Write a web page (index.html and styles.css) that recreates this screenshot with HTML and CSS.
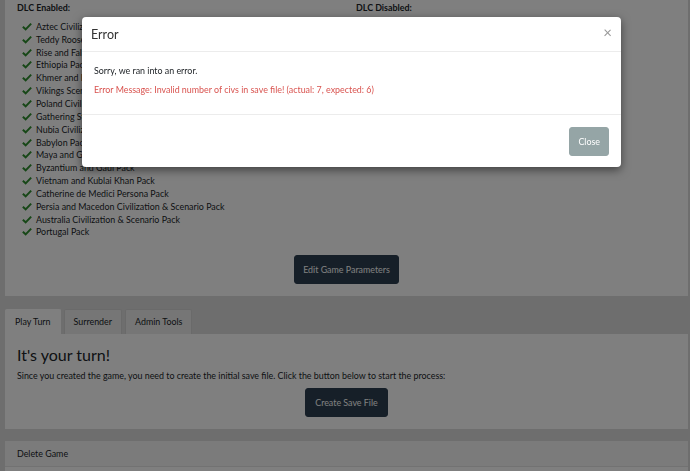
FILE: index.html
```html
<!DOCTYPE html>
<html lang="en">
<head>
    <meta charset="UTF-8">
    <meta name="viewport" content="width=device-width, initial-scale=1.0">
    <title>Game</title>
    <link rel="stylesheet" href="styles.css">
</head>
<body>
    <div class="page">
        <div class="panel dlc-panel">
            <div class="dlc-grid">
                <div class="dlc-col">
                    <div class="dlc-title">DLC Enabled:</div>
                    <ul class="dlc-list" id="dlc-enabled"></ul>
                </div>
                <div class="dlc-col">
                    <div class="dlc-title">DLC Disabled:</div>
                </div>
            </div>
            <div class="center">
                <button class="btn btn-dark btn-edit">Edit Game Parameters</button>
            </div>
        </div>

        <div class="tabs-section">
            <ul class="tabs">
                <li class="tab active">Play Turn</li>
                <li class="tab">Surrender</li>
                <li class="tab">Admin Tools</li>
            </ul>
            <div class="panel tab-panel">
                <h2>It's your turn!</h2>
                <p>Since you created the game, you need to create the initial save file. Click the button below to start the process:</p>
                <div class="center">
                    <button class="btn btn-dark btn-save">Create Save File</button>
                </div>
            </div>
        </div>

        <div class="card">
            <div class="card-header">Delete Game</div>
            <div class="card-body"></div>
        </div>
    </div>

    <div class="backdrop"></div>
    <div class="modal">
        <div class="modal-header">
            <span class="modal-title">Error</span>
            <span class="modal-close">&times;</span>
        </div>
        <div class="modal-body">
            <p>Sorry, we ran into an error.</p>
            <p class="text-danger">Error Message: Invalid number of civs in save file! (actual: 7, expected: 6)</p>
        </div>
        <div class="modal-footer">
            <button class="btn btn-secondary">Close</button>
        </div>
    </div>

    <script>
        // Liste des DLC actifs
        const dlcs = [
            "Aztec Civilization Pack",
            "Teddy Roosevelt Persona Pack",
            "Rise and Fall",
            "Ethiopia Pack",
            "Khmer and Indonesia Civilization & Scenario Pack",
            "Vikings Scenario Pack",
            "Poland Civilization & Scenario Pack",
            "Gathering Storm",
            "Nubia Civilization & Scenario Pack",
            "Babylon Pack",
            "Maya and Gran Colombia Pack",
            "Byzantium and Gaul Pack",
            "Vietnam and Kublai Khan Pack",
            "Catherine de Medici Persona Pack",
            "Persia and Macedon Civilization & Scenario Pack",
            "Australia Civilization & Scenario Pack",
            "Portugal Pack"
        ];

        const list = document.getElementById("dlc-enabled");
        dlcs.forEach(name => {
            const li = document.createElement("li");
            li.innerHTML = `
                <svg class="check" viewBox="0 0 12 10" width="10" height="9"><path d="M1 5.2 L4.4 8.4 L11 1.6" fill="none" stroke="currentColor" stroke-width="2.4"/></svg>
                <span></span>
            `;
            li.querySelector("span").textContent = name;
            list.appendChild(li);
        });
    </script>
</body>
</html>
```

FILE: styles.css
```css
body {
    font-family: Lato, "Open Sans", sans-serif;
    font-size: 8.9px;
    color: #212529;
    margin: 0;
    padding: 0;
    background-color: #dcdcdc;
}

.page {
    margin: 0 2px 0 5px;
}

.panel {
    background-color: #fff;
}

.center {
    text-align: center;
}

/* DLC */
.dlc-panel {
    padding: 1px 12px 12px;
}

.dlc-grid {
    display: grid;
    grid-template-columns: 339px 1fr;
}

.dlc-title {
    font-weight: bold;
    line-height: 13px;
}

.dlc-list {
    list-style: none;
    margin: 6px 0 0;
    padding: 0 0 0 5px;
}

.dlc-list li {
    display: flex;
    align-items: center;
    gap: 4px;
    height: 12.85px;
}

.check {
    color: #2f8f2f;
    flex-shrink: 0;
}

.btn-edit {
    margin-top: 17px;
    padding: 8px 12px;
}

/* Buttons */
.btn {
    font-family: inherit;
    font-size: 8.9px;
    padding: 8px 8px;
    border: 1px solid transparent;
    border-radius: 3px;
    color: #fff;
    cursor: pointer;
}

.btn-dark {
    background-color: #2c3e50;
    border-color: #2c3e50;
}

.btn-save {
    padding: 8px 9px;
}

.btn-secondary {
    background-color: #95a5a6;
    border-color: #95a5a6;
}

/* Tabs */
.tabs-section {
    margin-top: 13px;
}

.tabs {
    list-style: none;
    margin: 0;
    padding: 0;
    display: flex;
    gap: 3px;
}

.tab {
    padding: 0 9px;
    height: 24px;
    line-height: 24px;
    background-color: #ececec;
    border: 1px solid #d4d4d4;
    border-bottom: none;
    border-radius: 2px 2px 0 0;
}

.tab.active {
    background-color: #fff;
    border-color: #fff;
}

.tab-panel {
    padding: 10px 12px 12px;
}

.tab-panel h2 {
    font-size: 16px;
    font-weight: normal;
    margin: 0 0 5px;
    line-height: 21px;
}

.tab-panel p {
    margin: 0 0 7px;
}

/* Delete card */
.card {
    margin-top: 12px;
    background-color: #fff;
}

.card-header {
    padding: 0 12px;
    height: 25px;
    line-height: 25px;
    background-color: #f7f7f7;
    border-bottom: 1px solid #e4e4e4;
}

.card-body {
    height: 20px;
}

/* Modal */
.backdrop {
    position: fixed;
    inset: 0;
    background-color: rgba(0, 0, 0, 0.5);
}

.modal {
    position: fixed;
    left: 82px;
    top: 17px;
    width: 539px;
    background-color: #fff;
    border-radius: 4px;
    box-shadow: 0 3px 10px rgba(0, 0, 0, 0.5);
}

.modal-header {
    display: flex;
    justify-content: space-between;
    align-items: center;
    height: 34px;
    padding: 0 9px 0 9px;
    border-bottom: 1px solid #ececec;
}

.modal-title {
    font-size: 12.5px;
    color: #333;
}

.modal-close {
    font-size: 15px;
    color: #999;
    margin-top: -4px;
}

.modal-body {
    padding: 12px 12px 18px;
}

.modal-body p {
    margin: 0;
    line-height: 13px;
}

.modal-body p + p {
    margin-top: 6px;
}

.text-danger {
    color: #d9534f;
}

.modal-footer {
    display: flex;
    justify-content: flex-end;
    padding: 12px 12px 11px;
    border-top: 1px solid #ececec;
}
```
